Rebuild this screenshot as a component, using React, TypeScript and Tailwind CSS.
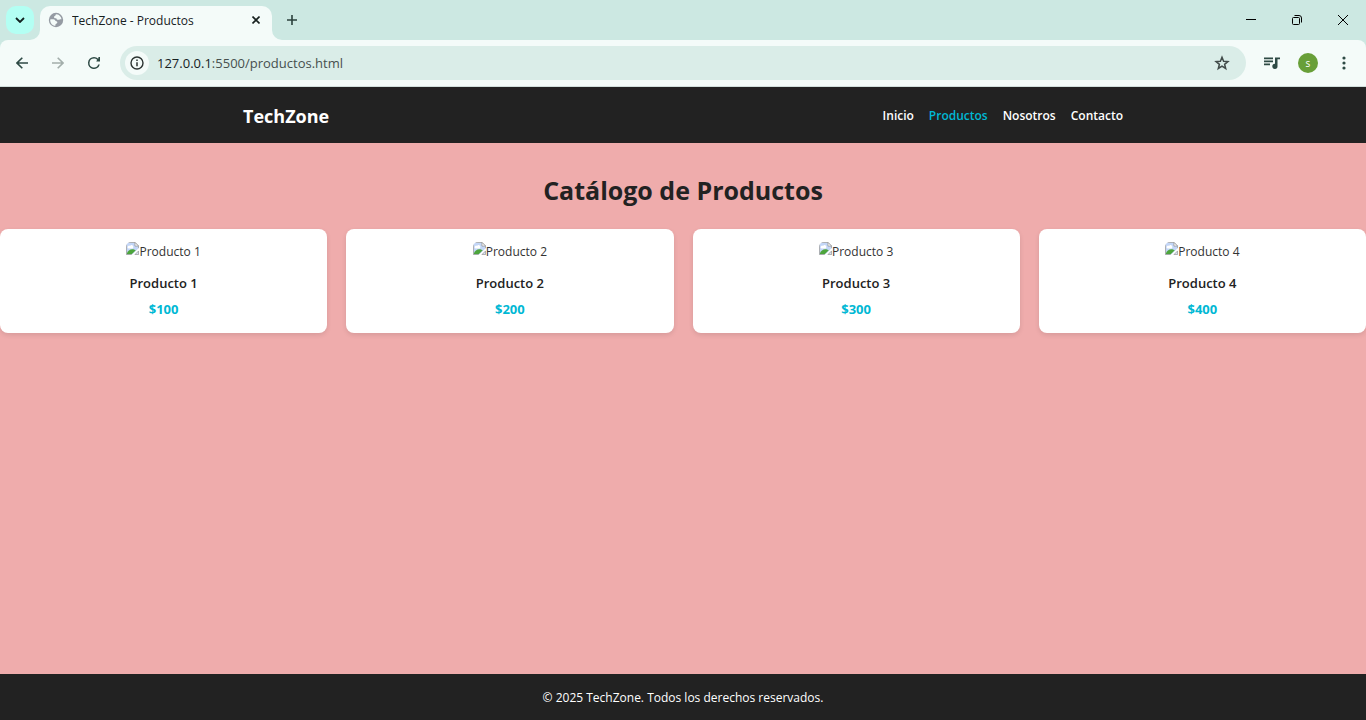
import type { ReactNode } from "react";

type Product = { name: string; price: string };

const products: Product[] = [
  { name: "Producto 1", price: "$100" },
  { name: "Producto 2", price: "$200" },
  { name: "Producto 3", price: "$300" },
  { name: "Producto 4", price: "$400" },
];

const links = [
  { label: "Inicio", href: "#inicio", active: false },
  { label: "Productos", href: "#productos", active: true },
  { label: "Nosotros", href: "#nosotros", active: false },
  { label: "Contacto", href: "#contacto", active: false },
];

function IconButton({ label, className, children }: { label: string; className: string; children: ReactNode }) {
  return (
    <button type="button" aria-label={label} className={`flex shrink-0 items-center justify-center ${className}`}>
      {children}
    </button>
  );
}

function TabStrip() {
  return (
    <div className="flex h-10 items-start bg-[#cce8e2]">
      <IconButton label="Buscar pestañas" className="mt-1.5 ml-1.5 size-7 rounded-[10px] bg-[#b3fff3]">
        <svg width="10" height="6" viewBox="0 0 10 6" fill="none" stroke="#12211f" strokeWidth="1.8">
          <path d="M1 1l4 4 4-4" />
        </svg>
      </IconButton>
      <div className="relative ml-1.5 mt-1.5 flex h-[34px] w-[232px] items-center rounded-t-[10px] bg-[#f4fbf9] pb-1.5 pl-2 pr-2">
        <svg className="absolute bottom-0 -left-2.5" width="10" height="10" viewBox="0 0 10 10" fill="#f4fbf9">
          <path d="M10 0v10H0A10 10 0 0 0 10 0z" />
        </svg>
        <svg className="absolute bottom-0 -right-2.5" width="10" height="10" viewBox="0 0 10 10" fill="#f4fbf9">
          <path d="M0 0v10h10A10 10 0 0 1 0 0z" />
        </svg>
        <svg className="shrink-0" width="16" height="16" viewBox="0 0 16 16">
          <circle cx="8" cy="8" r="7.2" fill="#959ba3" />
          <path d="M8.600 2.200c-1 .2-1.300.8-1.200 1.500-.9.200-1.500.8-1.300 1.700.2.900 1.100.900 2.200.9.300 1 .9 1.500 2 1.500 1.300 0 1.700-.8 3.200-.6-.2-2.600-2.200-4.700-4.900-5z" fill="#f4fbf9" />
          <path d="M2.200 7.400c1.600-.4 3.200-.3 4.200.2.900.5.800 1.500 1.900 1.700 1 .2 1.300 1 .8 1.800-.5.700-1.500.6-1.600 1.500l-.1 1.200C4.300 13.500 2 11 2.200 7.400z" fill="#f4fbf9" />
        </svg>
        <span className="ml-2 flex-1 truncate pt-px text-xs text-[#17211f]">TechZone - Productos</span>
        <IconButton label="Cerrar pestaña" className="size-4">
          <svg width="8" height="8" viewBox="0 0 8 8" stroke="#17211f" strokeWidth="1.6">
            <path d="M.5.5l7 7M7.500.5l-7 7" />
          </svg>
        </IconButton>
      </div>
      <IconButton label="Nueva pestaña" className="ml-3 mt-3 size-4">
        <svg width="10" height="10" viewBox="0 0 10 10" stroke="#2b403c" strokeWidth="1.6">
          <path d="M5 0v10M0 5h10" />
        </svg>
      </IconButton>
      <div className="ml-auto flex h-10">
        <IconButton label="Minimizar" className="w-[46px]">
          <svg width="10" height="10" viewBox="0 0 10 10" stroke="#000" shapeRendering="crispEdges">
            <path d="M0 4.500h10" />
          </svg>
        </IconButton>
        <IconButton label="Restaurar" className="w-[46px]">
          <svg width="10" height="10" viewBox="0 0 10 10" fill="none" stroke="#000">
            <rect x=".5" y="2.500" width="7" height="7" rx="1" />
            <path d="M2.500.5H7a2.500 2.500 0 0 1 2.500 2.500v4.500" />
          </svg>
        </IconButton>
        <IconButton label="Cerrar" className="w-[46px]">
          <svg width="10" height="10" viewBox="0 0 10 10" stroke="#000">
            <path d="M0 0l10 10M10 0L0 10" />
          </svg>
        </IconButton>
      </div>
    </div>
  );
}

function Toolbar() {
  return (
    <div className="bg-[#cce8e2]">
      <div className="flex h-[47px] items-center rounded-t-[8px] border-b border-[#d0dedb] bg-[#f4fbf9] pr-3">
        <IconButton label="Atrás" className="ml-3 size-5">
          <svg width="12" height="12" viewBox="0 0 12 12" fill="none" stroke="#2e4a45" strokeWidth="1.6">
            <path d="M12 6H1.200M6.300.7L1 6l5.300 5.300" />
          </svg>
        </IconButton>
        <IconButton label="Adelante" className="ml-4 size-5">
          <svg width="12" height="12" viewBox="0 0 12 12" fill="none" stroke="#a3aeab" strokeWidth="1.600">
            <path d="M0 6h10.800M5.700.7L11 6l-5.300 5.300" />
          </svg>
        </IconButton>
        <IconButton label="Recargar" className="ml-4 size-5">
          <svg width="18" height="18" viewBox="0 0 24 24" fill="#2e4a45">
            <path d="M17.650 6.350A7.950 7.950 0 0 0 12 4a8 8 0 1 0 7.730 10h-2.080A6 6 0 1 1 12 6c1.660 0 3.140.690 4.220 1.780L15 10h5V4h-2z" />
          </svg>
        </IconButton>
        <div className="ml-4 flex h-[34px] min-w-0 flex-1 items-center rounded-full bg-[#daede8] pl-[5px] pr-4">
          <IconButton label="Ver información del sitio" className="size-6 rounded-full bg-[#f4fbf9]">
            <svg width="14" height="14" viewBox="0 0 14 14" fill="none" stroke="#2b3331" strokeWidth="1.4">
              <circle cx="7" cy="7" r="6" />
              <path d="M7 6.200v4M7 3.600v1.500" strokeWidth="1.500" />
            </svg>
          </IconButton>
          <a href="#productos" className="ml-2 min-w-0 flex-1 truncate pt-px text-[13px] text-[#47504e]">
            <span className="text-[#17211f]">127.0.0.1</span>:5500/productos.html
          </a>
          <IconButton label="Añadir a marcadores" className="size-4">
            <svg width="16" height="16" viewBox="0 0 16 16" fill="none" stroke="#414b49" strokeWidth="1.500">
              <path d="M8 2.300l1.600 4 4.300.3-3.300 2.700 1.100 4.200L8 11.200l-3.700 2.300 1.100-4.200L2.100 6.600l4.300-.3z" />
            </svg>
          </IconButton>
        </div>
        <IconButton label="Controlar multimedia" className="ml-4 size-5">
          <svg width="16" height="13" viewBox="0 0 16 13" fill="#2e4a45">
            <path d="M0 .5h9v1.700H0zM0 3.500h9v1.700H0zM0 6.500h6v1.700H0zM11 .5h5v1.800h-2.500V9.200a2.600 2.600 0 1 1-2.500-2.500z" />
          </svg>
        </IconButton>
        <IconButton label="Perfil" className="ml-4 size-5 rounded-full bg-[#689f38] text-[10px] text-white">
          s
        </IconButton>
        <IconButton label="Menú" className="ml-4 size-5">
          <svg width="4" height="14" viewBox="0 0 4 14" fill="#2e4a45">
            <circle cx="2" cy="2" r="1.600" />
            <circle cx="2" cy="7" r="1.600" />
            <circle cx="2" cy="12" r="1.600" />
          </svg>
        </IconButton>
      </div>
    </div>
  );
}

function BrokenImage({ alt }: { alt: string }) {
  return (
    <div className="flex h-5 justify-center overflow-hidden text-[#333]">
      <svg className="rounded-tl-[5px]" width="13" height="13" viewBox="0 0 16 16">
        <path d="M.5.500h10.500l4.500 4.500v3L9 15.500H.5z" fill="#c3d6f7" />
        <path d="M2 7a2 2 0 0 1 3-2.200A2.200 2.200 0 0 1 9 6.500c0 1-1 1.500-1.500 1.500H3z" fill="#fff" />
        <path d="M1 14.500c1-4 4.500-6 8-5.500l3 1-5 5H1z" fill="#4da53c" />
        <path d="M15.500 8v-3L11 .500H.500v15H7" fill="none" stroke="#9b9b9b" />
        <path d="M11 .5v4.500h4.500z" fill="#fff" stroke="#9b9b9b" />
        <path d="M16 7.500v2L9.500 16H7z" fill="#fff" />
        <path d="M15.500 11v4.500H11z" fill="#d8e4f8" stroke="#9b9b9b" />
      </svg>
      <span className="text-xs leading-5">{alt}</span>
    </div>
  );
}

function ProductCard({ name, price }: Product) {
  return (
    <article className="flex flex-col rounded-lg bg-white px-3 pb-3.5 pt-[13px] text-center shadow-[0_2px_5px_rgba(0,0,0,0.1)]">
      <BrokenImage alt={name} />
      <h3 className="mt-[11px] text-[13px] font-semibold leading-5 text-[#222]">{name}</h3>
      <p className="mt-1.5 text-[13px] font-bold leading-5 text-[#00b8d4]">{price}</p>
    </article>
  );
}

export default function App() {
  return (
    <div className="flex min-h-screen flex-col bg-[#efacac] font-['Open_Sans','Noto_Sans',sans-serif]">
      <TabStrip />
      <Toolbar />
      <header className="bg-[#222] px-4">
        <div className="mx-auto flex h-14 max-w-[880px] items-center justify-between pt-0.5">
          <div className="text-lg font-bold text-white">TechZone</div>
          <nav className="flex gap-[15px] text-xs font-semibold">
            {links.map((link) => (
              <a key={link.label} href={link.href} className={link.active ? "text-[#00b8d4]" : "text-white"}>
                {link.label}
              </a>
            ))}
          </nav>
        </div>
      </header>
      <main className="flex-1 pt-8">
        <h2 className="text-center text-[25px] font-bold leading-[30px] text-[#222]">Catálogo de Productos</h2>
        <section className="mt-6 grid grid-cols-4 gap-[19px]">
          {products.map((product) => (
            <ProductCard key={product.name} {...product} />
          ))}
        </section>
      </main>
      <footer className="flex h-[46px] items-center justify-center bg-[#222] pt-0.5 text-xs text-white">
        <p>© 2025 TechZone. Todos los derechos reservados.</p>
      </footer>
    </div>
  );
}
